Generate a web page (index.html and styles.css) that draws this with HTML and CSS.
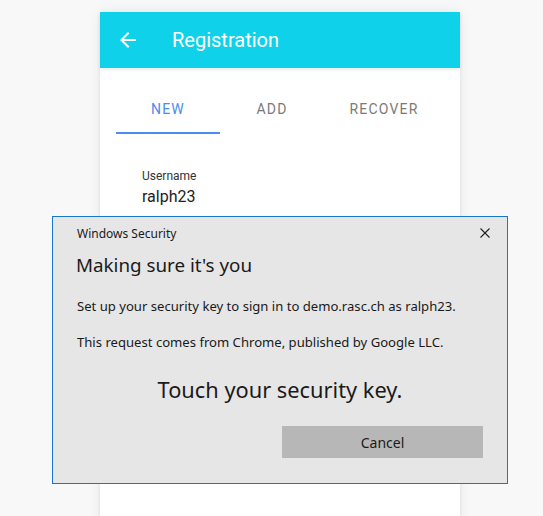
FILE: index.html
```html
<!DOCTYPE html>
<html>
<head>
<meta charset="utf-8">
<link rel="stylesheet" href="styles.css">
</head>
<body>
<div class="card">
  <header class="toolbar">
    <svg class="back" width="24" height="24" viewBox="0 0 24 24"><path d="M20 11H7.83l5.59-5.59L12 4l-8 8 8 8 1.41-1.41L7.83 13H20v-2z" fill="#fff"/></svg>
    <span class="title">Registration</span>
  </header>
  <div class="content">
    <nav class="tabs">
      <div class="tab active">NEW</div>
      <div class="tab">ADD</div>
      <div class="tab wide">RECOVER</div>
    </nav>
    <div class="field">
      <div class="label">Username</div>
      <div class="value">ralph23</div>
    </div>
  </div>
</div>

<div class="dialog">
  <div class="dlg-top">
    <span class="dlg-app">Windows Security</span>
    <svg class="close" width="10" height="10" viewBox="0 0 10 10"><path d="M0.5 0.5L9.5 9.5M9.5 0.5L0.5 9.5" stroke="#222" stroke-width="1.1"/></svg>
  </div>
  <h1 class="dlg-title">Making sure it's you</h1>
  <p class="dlg-text">Set up your security key to sign in to demo.rasc.ch as ralph23.</p>
  <p class="dlg-text">This request comes from Chrome, published by Google LLC.</p>
  <p class="dlg-big">Touch your security key.</p>
  <div class="dlg-actions">
    <button class="cancel">Cancel</button>
  </div>
</div>
</body>
</html>
```
FILE: styles.css
```css
html, body {
  margin: 0;
  padding: 0;
  height: 100%;
  overflow: hidden;
}
body {
  background: #f8f8f8;
  font-family: Roboto, "Liberation Sans", sans-serif;
  position: relative;
}
.card {
  margin-left: 100px;
  margin-top: 12px;
  width: 360px;
  height: 600px;
  background: #fff;
  box-shadow: 0 0 12px rgba(0, 0, 0, 0.08), 0 1px 3px rgba(0,0,0,0.06);
}
.toolbar {
  height: 56px;
  background: #0fd2ea;
  display: flex;
  align-items: center;
  padding-left: 16px;
  box-shadow: 0 2px 3px rgba(0,0,0,0.08);
  position: relative;
}
.back {
  display: block;
}
.title {
  color: #fff;
  font-size: 20px;
  margin-left: 32px;
  margin-top: -1px;
}
.content {
  padding: 16px 16px 0;
}
.tabs {
  display: flex;
  height: 50px;
}
.tab {
  width: 104px;
  display: flex;
  justify-content: center;
  align-items: center;
  padding-top: 1px;
  box-sizing: border-box;
  font-size: 14px;
  letter-spacing: 1.2px;
  color: #7a7a7a;
  font-weight: 400;
  border-bottom: 2px solid transparent;
}
.tab.wide {
  width: 120px;
}
.tab.active {
  color: #4a8cf0;
  border-bottom-color: #4a8cf0;
}
.field {
  margin: 35px 11px 0 10px;
  padding: 0 16px 11px;
  border-bottom: 1px solid #ddd;
}
.label {
  font-size: 12px;
  color: #333;
  line-height: 14px;
}
.value {
  font-size: 16px;
  color: #222;
  line-height: 20px;
  margin-top: 4px;
}
.dialog {
  position: absolute;
  left: 52px;
  top: 216px;
  width: 454px;
  height: 266px;
  background: #e6e6e6;
  border: 1px solid #1976d2;
  font-family: "Noto Sans", "Open Sans", sans-serif;
  color: #1a1a1a;
  box-sizing: content-box;
}
.dlg-top {
  display: flex;
  justify-content: space-between;
  align-items: center;
  padding: 7px 17px 0 24px;
  height: 18px;
}
.dlg-app {
  font-size: 12px;
}
.close {
  display: block;
}
.dlg-title {
  font-size: 18.8px;
  font-weight: normal;
  margin: 10px 0 0 23px;
  line-height: 26px;
}
.dlg-text {
  font-size: 13.1px;
  margin: 19px 0 0 24px;
  line-height: 18px;
}
.dlg-text + .dlg-text {
  margin-top: 18px;
}
.dlg-big {
  font-size: 21.8px;
  text-align: center;
  margin: 24px 0 0;
  line-height: 30px;
}
.dlg-actions {
  display: flex;
  justify-content: flex-end;
  padding-right: 24px;
  margin-top: 21px;
}
.cancel {
  width: 201px;
  height: 32px;
  border: none;
  background: #b7b7b7;
  font-family: "Noto Sans", "Open Sans", sans-serif;
  font-size: 14px;
  color: #1a1a1a;
}
```
